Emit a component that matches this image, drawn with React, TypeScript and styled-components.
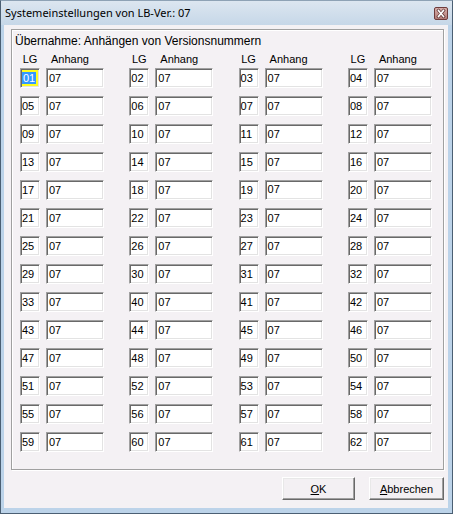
import styled, { createGlobalStyle } from "styled-components";

const GlobalStyle = createGlobalStyle`
  html, body {
    margin: 0;
    padding: 0;
  }
  body {
    width: 453px;
    height: 514px;
    overflow: hidden;
    background: #ffffff;
    font-family: "Liberation Sans", Arial, sans-serif;
  }
  * {
    box-sizing: border-box;
  }
`;

const Window = styled.div`
  width: 453px;
  height: 514px;
  display: flex;
  flex-direction: column;
  background: #bcd3e9;
  border: 1px solid #4b5f73;
  border-top-color: #8ea2b5;
  padding: 0 4px 5px 3px;
`;

const TitleBar = styled.div`
  height: 24px;
  flex-shrink: 0;
  display: flex;
  align-items: center;
  justify-content: space-between;
  padding-left: 1px;
  margin: 0 -4px 0 -3px;
  padding: 0 4px 0 4px;
  background: linear-gradient(#dce6f0, #c6d7e8);
`;

const Caption = styled.span`
  font-family: "Noto Sans", "Liberation Sans", sans-serif;
  font-size: 11px;
  color: #000;
  line-height: 16px;
`;

const CloseButton = styled.div`
  width: 14px;
  height: 13px;
  display: flex;
  margin-top: 1px;
`;

const Client = styled.div`
  flex: 1;
  display: flex;
  flex-direction: column;
  background: #f4f1f4;
  padding: 4px 4px 8px 7px;
`;

const GroupBox = styled.div`
  flex: 1;
  border: 1px solid #a0a0a0;
  box-shadow: 1px 1px 0 #ffffff, inset 1px 1px 0 #ffffff;
  padding: 4px 0 0 3px;
  display: flex;
  flex-direction: column;
`;

const GroupLabel = styled.div`
  font-size: 12px;
  line-height: 14px;
  color: #000;
`;

const Grid = styled.div`
  margin: 4px 0 0 5px;
  display: grid;
  grid-template-columns: repeat(4, 84px);
  column-gap: 25.3px;
  row-gap: 8px;
`;

const HeaderRow = styled.div`
  display: grid;
  grid-template-columns: repeat(4, 84px);
  column-gap: 25.3px;
  margin-left: 5px;
  margin-top: 4px;
  margin-bottom: 2px;
`;

const Pair = styled.div`
  display: flex;
  gap: 6px;
`;

const HeaderCell = styled.div<{ $w: number; $center?: boolean }>`
  width: ${(p) => p.$w}px;
  font-size: 11px;
  line-height: 14px;
  color: #000;
  text-align: ${(p) => (p.$center ? "center" : "left")};
  padding-left: ${(p) => (p.$center ? 0 : 5)}px;
`;

const Field = styled.div<{ $w: number; $pad: number; $focused?: boolean; $high?: boolean }>`
  width: ${(p) => p.$w}px;
  height: 20px;
  font-size: 11px;
  line-height: 16px;
  color: #000;
  white-space: nowrap;
  overflow: hidden;
  padding-left: ${(p) => p.$pad}px;
  padding-top: ${(p) => (p.$high ? 0 : 1)}px;
  background: ${(p) => (p.$focused ? "#ffff1e" : "#ffffff")};
  border: 1px solid;
  border-color: #a0a0a0 #ffffff #ffffff #a0a0a0;
  box-shadow: inset 1px 1px 0 #696969, inset -1px -1px 0 #e3e3e3;
  padding-right: 0;
  padding-bottom: 0;
  & > span {
    padding: 0 1px;
  }
`;

const Selection = styled.span`
  background: #3399ff;
  color: #ffffff;
  display: inline-block;
  line-height: 12px;
  margin-top: 2px;
  margin-left: 1px;
`;

const Footer = styled.div`
  display: flex;
  justify-content: flex-end;
  gap: 14px;
  margin-top: 7px;
  padding-right: 0;
`;

const Button = styled.div<{ $w: number }>`
  width: ${(p) => p.$w}px;
  height: 23px;
  display: flex;
  align-items: center;
  justify-content: center;
  font-size: 11px;
  color: #000;
  background: #f3f0f3;
  border: 1px solid;
  border-color: #ffffff #696969 #696969 #ffffff;
  box-shadow: inset -1px -1px 0 #a0a0a0, inset 1px 1px 0 #e8e8e8;
`;

const buildRows = (): string[][] => {
  const rows: string[][] = [];
  for (let r = 0; r < 8; r++) {
    rows.push([1, 2, 3, 4].map((c) => String(r * 4 + c).padStart(2, "0")));
  }
  rows.push(["33", "40", "41", "42"]);
  for (let r = 0; r < 5; r++) {
    rows.push([1, 2, 3, 4].map((c) => String(42 + r * 4 + c)));
  }
  return rows;
};

const rows = buildRows();

function CloseIcon() {
  return (
    <svg width="14" height="13" viewBox="0 0 14 13">
      <defs>
        <linearGradient id="cg" x1="0" y1="0" x2="0" y2="1">
          <stop offset="0" stopColor="#d9b0ac" />
          <stop offset="1" stopColor="#b07a76" />
        </linearGradient>
      </defs>
      <rect x="0.5" y="0.5" width="13" height="12" rx="1.5" fill="url(#cg)" stroke="#6e3c3c" />
      <path d="M4.5 3.5 L9.5 9.5 M9.5 3.5 L4.5 9.5" stroke="#5a3030" strokeWidth="3" strokeLinecap="square" />
      <path d="M4.5 3.5 L9.5 9.5 M9.5 3.5 L4.5 9.5" stroke="#ffffff" strokeWidth="1.6" strokeLinecap="square" />
    </svg>
  );
}

export default function App() {
  return (
    <>
      <GlobalStyle />
      <Window>
        <TitleBar>
          <Caption>Systemeinstellungen von LB-Ver.: 07</Caption>
          <CloseButton>
            <CloseIcon />
          </CloseButton>
        </TitleBar>
        <Client>
          <GroupBox>
            <GroupLabel>Übernahme: Anhängen von Versionsnummern</GroupLabel>
            <HeaderRow>
              {[0, 1, 2, 3].map((i) => (
                <Pair key={i}>
                  <HeaderCell $w={20} $center>LG</HeaderCell>
                  <HeaderCell $w={58}>Anhang</HeaderCell>
                </Pair>
              ))}
            </HeaderRow>
            <Grid style={{ marginTop: 0 }}>
              {rows.map((row, r) =>
                row.map((lg, c) => (
                  <Pair key={`${r}-${c}`}>
                    {r === 0 && c === 0 ? (
                      <Field $w={20} $pad={0} $focused>
                        <Selection>{lg}</Selection>
                      </Field>
                    ) : (
                      <Field $w={20} $pad={1}>{lg}</Field>
                    )}
                    <Field $w={58} $pad={2} $high={lg === "19"}>07</Field>
                  </Pair>
                ))
              )}
            </Grid>
          </GroupBox>
          <Footer>
            <Button $w={73}>
              <span><u>O</u>K</span>
            </Button>
            <Button $w={75}>
              <span><u>A</u>bbrechen</span>
            </Button>
          </Footer>
        </Client>
      </Window>
    </>
  );
}
